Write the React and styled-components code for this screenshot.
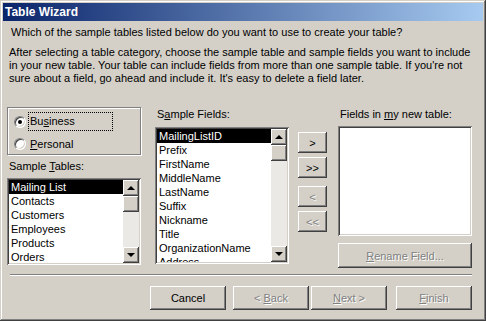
import React from 'react';
import styled, { createGlobalStyle, css } from 'styled-components';

const GlobalStyle = createGlobalStyle`
  html, body {
    margin: 0;
    padding: 0;
    background: #d4d0c8;
  }
  body {
    font-family: "Liberation Sans", Arial, sans-serif;
    font-size: 11px;
    color: #000;
  }
`;

const raised = css`
  box-shadow: inset -1px -1px #404040, inset 1px 1px #ffffff,
    inset -2px -2px #808080, inset 2px 2px #d4d0c8;
`;

const sunken = css`
  box-shadow: inset 1px 1px #808080, inset -1px -1px #ffffff,
    inset 2px 2px #404040, inset -2px -2px #d4d0c8;
`;

const Window = styled.div`
  width: 486px;
  height: 321px;
  box-sizing: border-box;
  padding: 3px;
  display: flex;
  flex-direction: column;
  background: #d4d0c8;
  box-shadow: inset -1px -1px #404040, inset 1px 1px #d4d0c8,
    inset -2px -2px #808080, inset 2px 2px #ffffff;
`;

const TitleBar = styled.div`
  height: 18px;
  display: flex;
  align-items: center;
  padding-left: 2px;
  background: linear-gradient(to right, #0a246a, #a6caf0);
  color: #fff;
  font-weight: bold;
  font-size: 12px;
`;

const Body = styled.div`
  padding: 0 11px 0 4px;
  display: flex;
  flex-direction: column;
`;

const Question = styled.div`
  margin: 5px 0 0 4px;
  line-height: 13px;
`;

const Intro = styled.div`
  margin: 7px 0 0 2px;
  line-height: 13px;
`;

const MainRow = styled.div`
  margin-top: 22px;
  display: flex;
  align-items: flex-start;
`;

const Column = styled.div`
  width: ${p => p.$w || 134}px;
  margin-left: ${p => p.$ml || 0}px;
  padding-top: ${p => p.$pt || 0}px;
  display: flex;
  flex-direction: column;
`;

const GroupBox = styled.div`
  height: 48px;
  box-sizing: border-box;
  border: 1px solid #808080;
  box-shadow: inset 1px 1px #ffffff, 1px 1px #ffffff;
  padding: 4px 0 0 6px;
  display: flex;
  flex-direction: column;
  gap: 3px;
`;

const RadioRow = styled.div`
  display: flex;
  align-items: center;
  height: 20px;
`;

const RadioCircle = styled.span`
  width: 12px;
  height: 12px;
  box-sizing: border-box;
  border-radius: 50%;
  background: #fff;
  border: 1px solid;
  border-color: #808080 #ffffff #ffffff #808080;
  box-shadow: inset 1px 1px #404040, inset -1px -1px #d4d0c8;
  display: flex;
  align-items: center;
  justify-content: center;
  margin-right: 3px;
  &::after {
    content: '';
    width: 4px;
    height: 4px;
    border-radius: 50%;
    background: ${p => (p.$checked ? '#000' : 'transparent')};
  }
`;

const RadioLabel = styled.span`
  padding: 2px 2px 3px 1px;
  outline: ${p => (p.$focus ? '1px dotted #000' : 'none')};
  width: ${p => (p.$focus ? '80px' : 'auto')};
`;

const Label = styled.div`
  line-height: 13px;
  margin-top: ${p => p.$mt || 0}px;
  margin-left: 2px;
`;

const ListBox = styled.div`
  height: ${p => p.$h}px;
  margin-top: ${p => p.$mt || 0}px;
  box-sizing: border-box;
  padding: 2px;
  background: #fff;
  display: flex;
  overflow: hidden;
  ${sunken}
`;

const Items = styled.div`
  flex: 1;
  overflow: hidden;
`;

const Item = styled.div`
  height: 14px;
  line-height: 14px;
  padding-left: 2px;
  white-space: nowrap;
  background: ${p => (p.$selected ? '#000' : 'transparent')};
  color: ${p => (p.$selected ? '#fff' : '#000')};
`;

const ScrollBar = styled.div`
  width: 16px;
  display: flex;
  flex-direction: column;
  background: #ebe9e5;
`;

const ScrollButton = styled.div`
  height: 16px;
  background: #d4d0c8;
  display: flex;
  align-items: center;
  justify-content: center;
  ${raised}
  &::after {
    content: '';
    border-left: 4px solid transparent;
    border-right: 4px solid transparent;
    ${p => (p.$down ? 'border-top: 4px solid #000;' : 'border-bottom: 4px solid #000;')}
  }
`;

const Thumb = styled.div`
  height: 16px;
  background: #d4d0c8;
  ${raised}
`;

const Track = styled.div`
  flex: 1;
`;

const Button = styled.div`
  width: ${p => p.$w || 76}px;
  height: ${p => p.$h || 24}px;
  margin-top: ${p => p.$mt || 0}px;
  margin-left: ${p => p.$ml || 0}px;
  box-sizing: border-box;
  background: #d4d0c8;
  display: flex;
  align-items: center;
  justify-content: center;
  white-space: pre;
  color: ${p => (p.$disabled ? '#808080' : '#000')};
  text-shadow: ${p => (p.$disabled ? '1px 1px #ffffff' : 'none')};
  ${raised}
`;

const Separator = styled.div`
  margin: 6px 0 0 3px;
  height: 1px;
  background: #808080;
  border-bottom: 1px solid #ffffff;
`;

const Footer = styled.div`
  margin-top: 10px;
  display: flex;
  justify-content: flex-end;
`;

const U = styled.span`
  text-decoration: underline;
`;

const ScrollList = ({ items, height, mt }) => (
  <ListBox $h={height} $mt={mt}>
    <Items>
      {items.map((it, i) => (
        <Item key={it} $selected={i === 0}>{it}</Item>
      ))}
    </Items>
    <ScrollBar>
      <ScrollButton />
      <Thumb />
      <Track />
      <ScrollButton $down />
    </ScrollBar>
  </ListBox>
);

const tables = ['Mailing List', 'Contacts', 'Customers', 'Employees', 'Products', 'Orders'];
const fields = [
  'MailingListID', 'Prefix', 'FirstName', 'MiddleName', 'LastName', 'Suffix',
  'Nickname', 'Title', 'OrganizationName', 'Address',
];

export default function App() {
  return (
    <>
      <GlobalStyle />
      <Window>
        <TitleBar>Table Wizard</TitleBar>
        <Body>
          <Question>Which of the sample tables listed below do you want to use to create your table?</Question>
          <Intro>
            After selecting a table category, choose the sample table and sample fields you want to include<br />
            in your new table. Your table can include fields from more than one sample table. If you're not<br />
            sure about a field, go ahead and include it. It's easy to delete a field later.
          </Intro>
          <MainRow>
            <Column>
              <GroupBox>
                <RadioRow>
                  <RadioCircle $checked />
                  <RadioLabel $focus>Bu<U>s</U>iness</RadioLabel>
                </RadioRow>
                <RadioRow>
                  <RadioCircle />
                  <RadioLabel><U>P</U>ersonal</RadioLabel>
                </RadioRow>
              </GroupBox>
              <Label $mt={5}>Sample <U>T</U>ables:</Label>
              <ScrollList items={tables} height={87} mt={5} />
            </Column>
            <Column $ml={14}>
              <Label $mt={1}>S<U>a</U>mple Fields:</Label>
              <ScrollList items={fields} height={137} mt={6} />
            </Column>
            <Column $w={29} $ml={9} $pt={25}>
              <Button $w={29} $h={21}>&gt;</Button>
              <Button $w={29} $h={21} $mt={4}>&gt;&gt;</Button>
              <Button $w={29} $h={21} $mt={8} $disabled>&lt;</Button>
              <Button $w={29} $h={21} $mt={4} $disabled>&lt;&lt;</Button>
            </Column>
            <Column $ml={11}>
              <Label $mt={1}>Fields in <U>m</U>y new table:</Label>
              <ListBox $h={110} $mt={5} />
              <Button $w={134} $h={25} $mt={7} $disabled><U>R</U>ename Field...</Button>
            </Column>
          </MainRow>
          <Separator />
          <Footer>
            <Button>Cancel</Button>
            <Button $ml={7} $disabled>{'< '}<U>B</U>ack</Button>
            <Button $ml={2} $disabled><U>N</U>{'ext >'}</Button>
            <Button $ml={9} $disabled><U>F</U>inish</Button>
          </Footer>
        </Body>
      </Window>
    </>
  );
}
